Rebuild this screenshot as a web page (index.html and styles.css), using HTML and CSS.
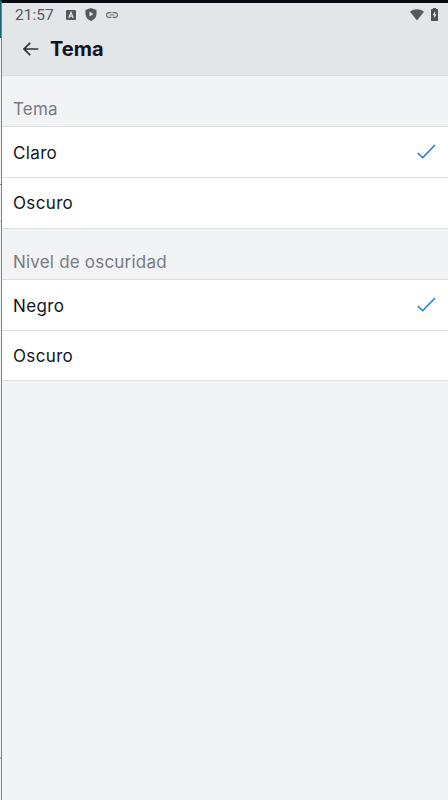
FILE: index.html
```html
<!DOCTYPE html>
<html lang="es">
<head>
<meta charset="utf-8">
<title>Tema</title>
<link rel="stylesheet" href="styles.css">
</head>
<body>
<div class="backdrop"></div>
<div class="screen">
  <header class="header">
    <div class="status">
      <span class="clock">21:57</span>
      <svg class="app" width="10" height="10" viewBox="0 0 10 10"><rect width="10" height="10" rx="1" fill="#55585c"/><path d="M2.8 8 5 2.3 7.2 8M3.7 6.1h2.6" fill="none" stroke="#e3e7ea" stroke-width="1.2"/></svg>
      <svg class="shield" width="12" height="13" viewBox="0 0 12 13"><path d="M6 0 11.5 2v4c0 3.2-2.2 5.8-5.5 7C2.7 11.800.5 9.200.5 6V2Z" fill="#55585c"/><path d="M4.500 3.500v5L8.500 6Z" fill="#e3e7ea"/></svg>
      <svg class="link" width="12" height="6" viewBox="0 0 12 6"><path d="M5.400.6H3a2.400 2.400 0 0 0 0 4.800h2.400M6.600.6H9a2.400 2.400 0 0 1 0 4.800H6.600M3.600 3h4.800" fill="none" stroke="#66696d" stroke-width="1.100"/></svg>
      <svg class="wifi" width="14" height="12" viewBox="0 0 14 12"><path d="M0 2.700C4-.6 10-.6 14 2.700L7 11.500Z" fill="#55585c"/></svg>
      <svg class="battery" width="7" height="13" viewBox="0 0 7 12" preserveAspectRatio="none"><path d="M2 0h3v1h1.200q.8 0 .8.800v9.400q0 .8-.8.800H.8Q0 12 0 11.200V1.800Q0 1 .8 1H2Z" fill="#4d5054"/><path d="M4.300 2.700 1.700 6.800h1.500v3L5.500 5.800H4Z" fill="#e3e7ea"/></svg>
    </div>
    <div class="titlebar">
      <svg class="back" width="16" height="14" viewBox="0 0 16 14"><path d="M15.300 7H1.200M7.200.8 1 7l6.200 6.200" fill="none" stroke="#30343d" stroke-width="1.700"/></svg>
      <h1>Tema</h1>
    </div>
  </header>
  <main>
    <h2>Tema</h2>
    <ul>
      <li>Claro<svg class="check" width="19" height="15" viewBox="0 0 19 15"><path d="M.8 9 5.700 13.700 18 1" fill="none" stroke="#1877f2" stroke-width="1.500"/></svg></li>
      <li>Oscuro</li>
    </ul>
    <h2>Nivel de oscuridad</h2>
    <ul class="levels">
      <li>Negro<svg class="check" width="19" height="15" viewBox="0 0 19 15"><path d="M.8 9 5.700 13.700 18 1" fill="none" stroke="#1877f2" stroke-width="1.500"/></svg></li>
      <li>Oscuro</li>
    </ul>
  </main>
</div>
</body>
</html>
```
FILE: styles.css
```css
* { box-sizing: border-box; }
body {
  margin: 0;
  height: 800px;
  display: flex;
  overflow: hidden;
  font-family: Inter, "Liberation Sans", sans-serif;
  color: #111522;
}
.backdrop {
  width: 1px;
  background: linear-gradient(#13626f 0 38px, #f2f4f5 38px 184px, #777b7e 184px 185px, #f2f4f5 185px 221px, #b8bcbe 221px 222px, #f2f4f5 222px 757px, #b8bcbe 757px 759px, #f2f4f5 759px);
}
.screen {
  flex: 1;
  border-top: 3px solid #080a12;
  border-left: 1px solid #718687;
  background: #f1f3f5;
}
.header {
  height: 73px;
  background: #e2e6e9;
  border-bottom: 1px solid #dde0e3;
}
.status {
  height: 23px;
  display: flex;
  align-items: center;
  padding: 0 10px 0 13px;
}
.clock {
  width: 39px;
  font: 15.5px/24px Roboto, sans-serif;
  color: #55585c;
}
.app { margin-left: 12px; }
.shield { margin-left: 9px; }
.link { margin-left: 9px; }
.wifi { margin-left: auto; }
.battery { margin-left: 7px; }
.titlebar {
  height: 46px;
  display: flex;
  align-items: center;
  padding-left: 21px;
}
h1 {
  margin: 0 0 0 11px;
  font-size: 20px;
  line-height: 24px;
  font-weight: 700;
}
h2 {
  margin: 0;
  height: 50px;
  padding: 21px 11px 0;
  font-size: 17px;
  line-height: 24px;
  font-weight: 400;
  letter-spacing: .2px;
  color: #777b84;
}
ul {
  margin: 0;
  padding: 0;
  list-style: none;
  background: #fff;
  border-top: 1px solid #dcdfe3;
}
li {
  display: flex;
  align-items: flex-start;
  justify-content: space-between;
  height: 51px;
  padding: 14px 12px 0 11px;
  border-bottom: 1px solid #dee0e3;
  font-size: 17px;
  line-height: 24px;
  letter-spacing: .35px;
}
li:last-child { padding-top: 13px; }
.levels li:last-child { height: 50px; }
.check { margin-top: 3px; }
```
